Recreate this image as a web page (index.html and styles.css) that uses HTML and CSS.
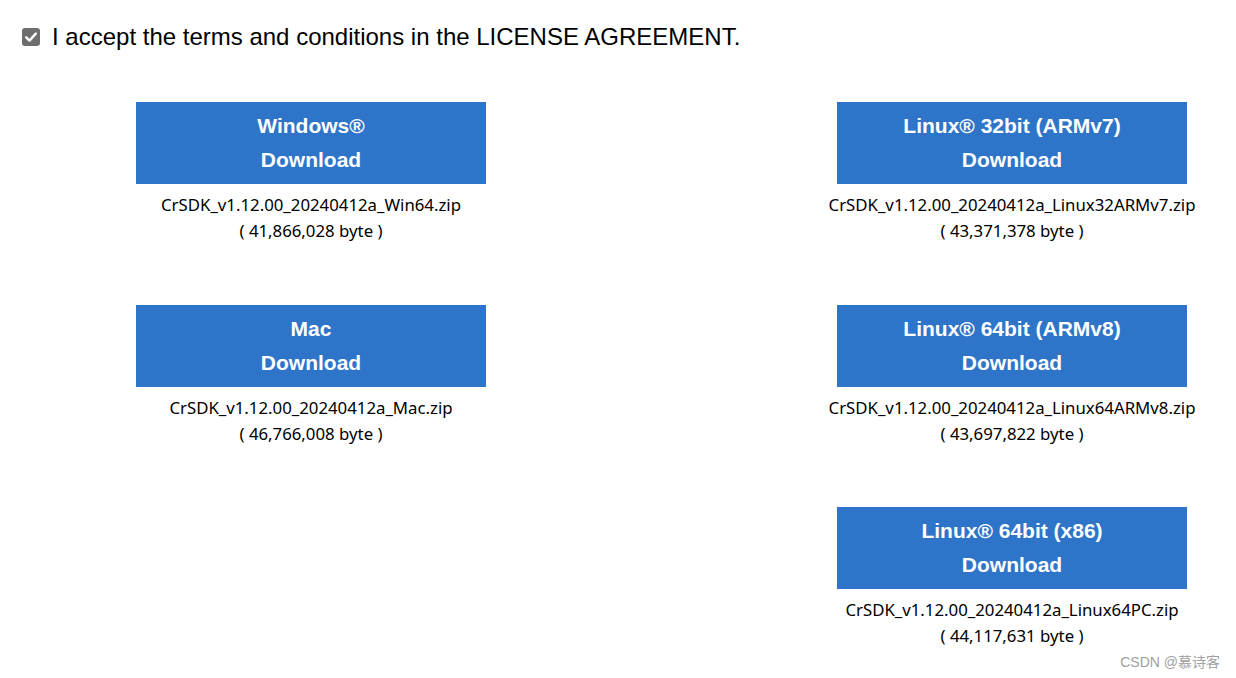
FILE: index.html
```html
<!DOCTYPE html>
<html lang="en">
<head>
<meta charset="utf-8">
<title>Download</title>
<link rel="stylesheet" href="styles.css">
</head>
<body>
<div class="page">
  <label class="accept">
    <span class="check"><svg width="18" height="18" viewBox="0 0 18 18"><rect x="0" y="0" width="18" height="18" rx="3" fill="#6e6e6e"/><path d="M4.2 9.3 L7.5 12.6 L13.8 5.6" fill="none" stroke="#fff" stroke-width="2.4" stroke-linecap="round" stroke-linejoin="round"/></svg></span>
    <span class="accept-text">I accept the terms and conditions in the LICENSE AGREEMENT.</span>
  </label>

  <div class="grid">
    <div class="item">
      <a class="btn" href="#">Windows®<br>Download</a>
      <div class="file">CrSDK_v1.12.00_20240412a_Win64.zip<br>( 41,866,028 byte )</div>
    </div>
    <div class="item">
      <a class="btn" href="#">Linux® 32bit (ARMv7)<br>Download</a>
      <div class="file">CrSDK_v1.12.00_20240412a_Linux32ARMv7.zip<br>( 43,371,378 byte )</div>
    </div>
    <div class="item">
      <a class="btn" href="#">Mac<br>Download</a>
      <div class="file">CrSDK_v1.12.00_20240412a_Mac.zip<br>( 46,766,008 byte )</div>
    </div>
    <div class="item">
      <a class="btn" href="#">Linux® 64bit (ARMv8)<br>Download</a>
      <div class="file">CrSDK_v1.12.00_20240412a_Linux64ARMv8.zip<br>( 43,697,822 byte )</div>
    </div>
    <div class="item empty"></div>
    <div class="item">
      <a class="btn" href="#">Linux® 64bit (x86)<br>Download</a>
      <div class="file">CrSDK_v1.12.00_20240412a_Linux64PC.zip<br>( 44,117,631 byte )</div>
    </div>
  </div>
</div>
<div class="watermark">CSDN @慕诗客</div>
</body>
</html>
```

FILE: styles.css
```css
html, body {
  margin: 0;
  padding: 0;
  background: #fff;
}
body {
  width: 1236px;
  height: 678px;
  overflow: hidden;
  position: relative;
  font-family: "Liberation Sans", Arial, sans-serif;
  color: #000;
}
.page {
  padding: 26px 0 0 22px;
}
.accept {
  display: flex;
  align-items: center;
  gap: 12px;
  height: 22px;
}
.check {
  display: flex;
  width: 18px;
  height: 18px;
}
.accept-text {
  font-size: 24px;
  line-height: 22px;
}
.grid {
  display: grid;
  grid-template-columns: 350px 350px;
  column-gap: 351px;
  row-gap: 60.5px;
  margin-top: 54px;
  margin-left: 114px;
}
.item {
  display: flex;
  flex-direction: column;
  align-items: center;
  width: 350px;
}
.empty {
  height: 142px;
}
.btn {
  display: block;
  box-sizing: border-box;
  width: 350px;
  height: 82px;
  padding: 7px 0;
  background: #2e75c9;
  color: #fff;
  text-decoration: none;
  text-align: center;
  font-weight: bold;
  font-size: 21px;
  line-height: 34px;
}
.file {
  margin-top: 8px;
  text-align: center;
  font-family: "Noto Sans", "Open Sans", sans-serif;
  font-size: 16.8px;
  line-height: 26px;
  white-space: nowrap;
}
.watermark {
  position: absolute;
  right: 16px;
  top: 651px;
  font-family: "Liberation Sans", "Noto Sans CJK SC", sans-serif;
  font-size: 14px;
  color: #a0a0a0;
}
```
